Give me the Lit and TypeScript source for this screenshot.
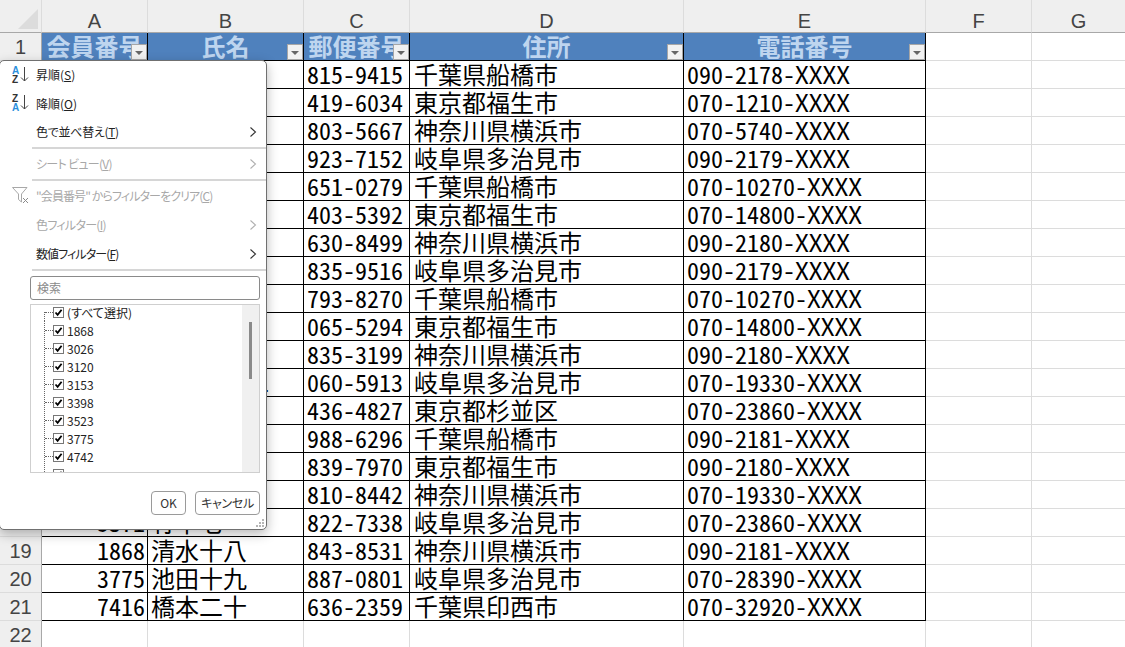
import { LitElement, html, css, svg } from "lit";
import { customElement } from "lit/decorators.js";

const names = ["佐藤一","鈴木二","高橋三","田中四","伊藤五","渡辺六","山本七","中村八","小林九","加藤十","吉田十一","佐々木十二","山田十三","松本十四","井上十五","木村十六","竹千七","清水十八","池田十九","橋本二十"];
const ids = ["1001","3026","3120","3153","3398","3523","4742","5012","5230","5488","5601","5712","5820","5934","6011","6120","5371","1868","3775","7416"];
const zips = ["815-9415","419-6034","803-5667","923-7152","651-0279","403-5392","630-8499","835-9516","793-8270","065-5294","835-3199","060-5913","436-4827","988-6296","839-7970","810-8442","822-7338","843-8531","887-0801","636-2359"];
const addrs = ["千葉県船橋市","東京都福生市","神奈川県横浜市","岐阜県多治見市","千葉県船橋市","東京都福生市","神奈川県横浜市","岐阜県多治見市","千葉県船橋市","東京都福生市","神奈川県横浜市","岐阜県多治見市","東京都杉並区","千葉県船橋市","東京都福生市","神奈川県横浜市","岐阜県多治見市","神奈川県横浜市","岐阜県多治見市","千葉県印西市"];
const tels = ["090-2178-","070-1210-","070-5740-","090-2179-","070-10270-","070-14800-","090-2180-","090-2179-","070-10270-","070-14800-","090-2180-","070-19330-","070-23860-","090-2181-","090-2180-","070-19330-","070-23860-","090-2181-","070-28390-","070-32920-"];
const cols = ["A","B","C","D","E","F","G"];
const heads = ["会員番号","氏名","郵便番号","住所","電話番号"];
const checks = ["(すべて選択)","1868","3026","3120","3153","3398","3523","3775","4742",""];

const chevron = svg`<svg class="chev" width="8" height="12" viewBox="0 0 8 12"><path d="M1.5 1.5 6.5 6 1.5 10.5" fill="none" stroke="currentColor" stroke-width="1.1"/></svg>`;
const arrow = svg`<svg class="arrow" width="9" height="16" viewBox="0 0 9 16"><path d="M4.5 1V15M1 11.5 4.5 15 8 11.5" fill="none" stroke="#444" stroke-width="1"/></svg>`;

@customElement("app-root")
export class AppRoot extends LitElement {
  static styles = css`
    :host { display: block; width: 1125px; height: 647px; overflow: hidden; position: relative; background: #fff;
      font-family: "Noto Sans CJK JP", sans-serif; }
    .sheet { display: grid; grid-template-columns: 42px 106px 156px 106px 274px 242px 106px 94px; grid-template-rows: 33px; grid-auto-rows: 28px; }
    .c { box-sizing: border-box; border-right: 1px solid #dcdcdc; border-bottom: 1px solid #dcdcdc; position: relative;
      white-space: nowrap; font-size: 24px; line-height: 26px; font-feature-settings: "hwid"; color: #000; }
    .corner { background: #efefef; border-right: 1px solid #dcdcdc; border-bottom: 1px solid #a8a8a8; box-sizing: border-box; display: flex; align-items: flex-end; justify-content: flex-end; padding: 0 3px 3px 0; }
    .colh { background: #efefef; border-right: 1px solid #dcdcdc; border-bottom: 1px solid #a8a8a8; box-sizing: border-box;
      font-family: "Liberation Sans", sans-serif; font-size: 20px; color: #444; text-align: center; line-height: 24px; padding-top: 9px; }
    .rowh { background: #efefef; border-right: 1px solid #a8a8a8; border-bottom: 1px solid #dcdcdc; box-sizing: border-box;
      font-family: "Liberation Sans", sans-serif; font-size: 20px; color: #444; text-align: center; line-height: 28px; }
    .head { background: #4f81bd; color: #bed5ef; font-weight: 700; text-align: center; border-right: 1px solid #000; border-bottom: 1px solid #000; overflow: hidden; line-height: 26px; }
    .d { border-right: 1px solid #000; border-bottom: 1px solid #000; padding-left: 3px; }
    .num { text-align: right; padding: 0 2px 0 0; }
    .name { padding-left: 3px; }
    .name.long { letter-spacing: -0.5px; }
    .addr { padding-left: 4px; }
    .x { font-feature-settings: normal; }
    .fb { position: absolute; right: 0; bottom: 0; width: 16px; height: 16px; box-sizing: border-box; background: #f1f1f1; border: 1px solid #a6a6a6; display: flex; align-items: center; justify-content: center; }
    .fb i { display: block; width: 0; height: 0; border-left: 4px solid transparent; border-right: 4px solid transparent; border-top: 4px solid #666; margin-top: 1px; }

    .menu { position: absolute; left: -1px; top: 60px; width: 268px; height: 470px; box-sizing: border-box; background: #fff;
      border: 1px solid #707070; border-radius: 5px; box-shadow: 0 4px 12px rgba(0,0,0,.28); font-size: 12px; color: #222;
      font-feature-settings: "palt"; }
    .mi { display: flex; align-items: center; height: 28px; position: relative; padding-left: 36px; padding-right: 9px; line-height: 16px; }
    .mi.tall { height: 29px; }
    .mi .t { flex: 1; white-space: nowrap; }
    .mi u { text-underline-offset: 1px; }
    .mi.dis { color: #a8a8a8; }
    .mi.tight { letter-spacing: -0.7px; }
    .mi.tighter { letter-spacing: -0.9px; }
    .mi.semi { letter-spacing: -0.3px; }
    .chev { display: block; color: #333; }
    .dis .chev { color: #b0b0b0; }
    .sep { height: 2px; background: #d6d6d6; margin: 1px 0 1px 32px; }
    .ico { position: absolute; left: 12px; top: 5px; width: 18px; height: 17px; display: flex; letter-spacing: 0; }
    .az { display: flex; flex-direction: column; width: 8px; font-family: "Liberation Sans", sans-serif; font-size: 10px; font-weight: 700; line-height: 9px; color: #333; text-align: left; }
    .az b { color: #2b8fdc; font-weight: 700; }
    .arrow { display: block; }
    .search { margin: 5px 6px 0 30px; height: 24px; box-sizing: border-box; border: 1px solid #8a8a8a; border-radius: 3px; color: #8a8a8a; padding-left: 6px; line-height: 21px; }
    .list { margin: 4px 6px 0 30px; height: 169px; box-sizing: border-box; border: 1px solid #cfcfcf; display: flex; overflow: hidden; }
    .tree { flex: 1; overflow: hidden; margin-top: -2px; }
    .tr { display: flex; align-items: center; height: 18px; margin-left: 13px; padding-left: 1px;
      background: repeating-linear-gradient(to bottom, #666 0 1px, transparent 1px 2px) 0 0 / 1px 100% no-repeat; color: #222; white-space: nowrap; }
    .tr.first { background-position: 0 100%; background-size: 1px 50%; }
    .dots { width: 8px; height: 0; border-top: 1px dotted #666; }
    .cb { width: 11px; height: 11px; box-sizing: border-box; border: 1px solid #777; background: #fff; display: block; margin-right: 3px; flex: none; }
    .sb { width: 17px; background: #f0f0f0; display: flex; flex-direction: column; align-items: center; padding-top: 17px; }
    .sb i { display: block; width: 3px; height: 57px; background: #8a8a8a; }
    .btns { display: flex; justify-content: flex-end; gap: 9px; margin: 18px 6px 0 0; }
    .btn { height: 24px; box-sizing: border-box; border: 1px solid #9a9a9a; border-radius: 4px; text-align: center; line-height: 22px; color: #333; }
    .ok { width: 35px; }
    .cancel { width: 65px; letter-spacing: -0.3px; }
    .grip { position: absolute; right: 1px; bottom: 1px; width: 9px; height: 9px; }
  `;

  private sortIcon(asc: boolean) {
    return html`<span class="ico"><span class="az">${asc ? html`<b>A</b><span>Z</span>` : html`<span>Z</span><b>A</b>`}</span>${arrow}</span>`;
  }

  render() {
    return html`
      <div class="sheet">
        <div class="corner"><svg width="20" height="20" viewBox="0 0 20 20"><path d="M20 0V20H0Z" fill="#dcdcdc"/></svg></div>
        ${cols.map((c) => html`<div class="colh">${c}</div>`)}

        <div class="rowh">1</div>
        ${heads.map((h) => html`<div class="c head">${h}<span class="fb"><i></i></span></div>`)}
        <div class="c"></div><div class="c"></div>

        ${names.map((n, i) => html`
          <div class="rowh">${i + 2}</div>
          <div class="c d num">${ids[i]}</div>
          <div class="c d name ${n.length > 4 ? "long" : ""}">${n}</div>
          <div class="c d">${zips[i]}</div>
          <div class="c d addr">${addrs[i]}</div>
          <div class="c d">${tels[i]}<span class="x">XXXX</span></div>
          <div class="c"></div><div class="c"></div>
        `)}
        <div class="rowh">22</div>
        ${cols.map(() => html`<div class="c"></div>`)}
      </div>

      <div class="menu">
        <div class="mi">${this.sortIcon(true)}<span class="t">昇順(<u>S</u>)</span></div>
        <div class="mi tall">${this.sortIcon(false)}<span class="t">降順(<u>O</u>)</span></div>
        <div class="mi semi"><span class="t">色で並べ替え(<u>T</u>)</span>${chevron}</div>
        <div class="sep"></div>
        <div class="mi dis tight"><span class="t">シート ビュー(<u>V</u>)</span>${chevron}</div>
        <div class="sep"></div>
        <div class="mi dis tighter">
          <span class="ico"><svg width="18" height="17" viewBox="0 0 18 17"><path d="M.5 .5H15L9.5 7V15L6.5 12.5V7Z" fill="none" stroke="#a8a8a8"/><path d="M11 11 16 16M16 11 11 16" stroke="#8a8a8a" fill="none"/></svg></span>
          <span class="t">"会員番号" からフィルターをクリア(<u>C</u>)</span>
        </div>
        <div class="mi tall dis tight"><span class="t">色フィルター(<u>I</u>)</span>${chevron}</div>
        <div class="mi tall tighter"><span class="t">数値フィルター(<u>F</u>)</span>${chevron}</div>
        <div class="sep"></div>
        <div class="search">検索</div>
        <div class="list">
          <div class="tree">
            ${checks.map((t, i) => html`<div class="tr ${i === 0 ? "first" : ""}">
              <span class="dots"></span>
              <svg class="cb" viewBox="0 0 9 9"><path d="M1.5 4.5 3.6 6.8 7.6 1.8" fill="none" stroke="#000" stroke-width="1.8"/></svg>
              ${t}</div>`)}
          </div>
          <div class="sb"><i></i></div>
        </div>
        <div class="btns"><div class="btn ok">OK</div><div class="btn cancel">キャンセル</div></div>
        <svg class="grip" viewBox="0 0 9 9"><g fill="#b5b5b5"><rect x="6" y="0" width="2" height="2"/><rect x="3" y="3" width="2" height="2"/><rect x="6" y="3" width="2" height="2"/><rect x="0" y="6" width="2" height="2"/><rect x="3" y="6" width="2" height="2"/><rect x="6" y="6" width="2" height="2"/></g></svg>
      </div>
    `;
  }
}
